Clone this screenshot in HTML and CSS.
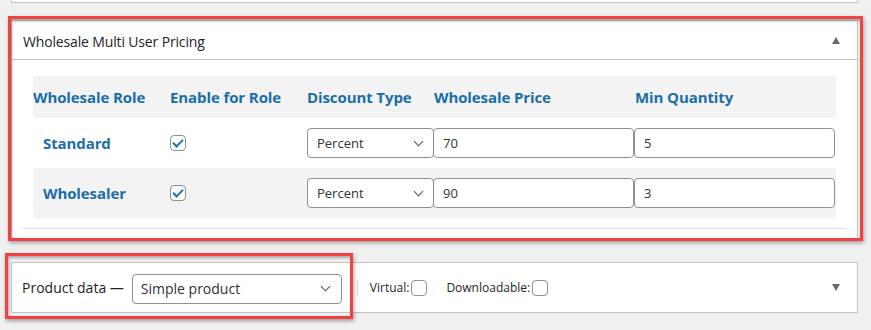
FILE: index.html
```html
<html>
	<head>
		<link rel="stylesheet" href="styles.css">
	</head>
<body>

	<div class="prev-box"></div>

	<div class="postbox" id="multi-user-pricing">
		<div class="postbox-header">
			<h2 class="hndle">Wholesale Multi User Pricing</h2>
			<span class="toggle-arrow up"></span>
		</div>
		<div class="inside">
			<table class="pricing">
				<thead>
					<tr>
						<th class="col-role">Wholesale Role</th>
						<th class="col-enable">Enable for Role</th>
						<th class="col-type">Discount Type</th>
						<th class="col-price">Wholesale Price</th>
						<th class="col-qty">Min Quantity</th>
					</tr>
				</thead>
				<tbody>
					<tr>
						<td class="role-name">Standard</td>
						<td><span class="checkbox checked"></span></td>
						<td><div class="select">Percent</div></td>
						<td><div class="text-input">70</div></td>
						<td><div class="text-input">5</div></td>
					</tr>
					<tr class="alt">
						<td class="role-name">Wholesaler</td>
						<td><span class="checkbox checked"></span></td>
						<td><div class="select">Percent</div></td>
						<td><div class="text-input">90</div></td>
						<td><div class="text-input">3</div></td>
					</tr>
				</tbody>
			</table>
			<div class="separator"></div>
		</div>
	</div>

	<div class="postbox" id="product-data">
		<div class="product-header">
			<span class="product-label">Product data —</span>
			<div class="select product-type">Simple product</div>
			<span class="divider"></span>
			<label class="option">Virtual:<span class="checkbox"></span></label>
			<label class="option">Downloadable:<span class="checkbox"></span></label>
			<span class="toggle-arrow down"></span>
		</div>
	</div>

	<!-- annotation outlines drawn over the screenshot -->
	<div class="mark mark-pricing"></div>
	<div class="mark mark-product"></div>

</body>
</html>
```

FILE: styles.css
```css
	body {
		margin: 0;
		background: #f0f0f1;
		font-family: "Open Sans", "Noto Sans", sans-serif;
		color: #1d2327;
		position: relative;
		width: 871px;
		height: 330px;
		overflow: hidden;
	}

	.prev-box {
		margin: 0 13px 0 11px;
		height: 2px;
		background: #fff;
		border: 1px solid #c3c4c7;
		border-top: none;
	}

	.postbox {
		margin: 0 13px 0 11px;
		background: #fff;
		border: 1px solid #c3c4c7;
	}
	#multi-user-pricing {
		margin-top: 17px;
	}
	#product-data {
		margin-top: 23px;
	}

	.postbox-header {
		display: flex;
		align-items: center;
		height: 38px;
		border-bottom: 1px solid #c3c4c7;
		padding: 0 11px;
	}
	.hndle {
		flex: 1;
		margin: 0;
		font-size: 14px;
		font-weight: normal;
		letter-spacing: -0.15px;
		padding-top: 3px;
	}

	.toggle-arrow {
		width: 0;
		height: 0;
		border-left: 4px solid transparent;
		border-right: 4px solid transparent;
		margin-right: 6px;
	}
	.toggle-arrow.up {
		border-bottom: 7px solid #646970;
	}
	.toggle-arrow.down {
		border-top: 7px solid #646970;
		margin-left: auto;
	}

	.inside {
		padding: 16px 11px 9px;
	}

	.pricing {
		border-collapse: collapse;
		margin: 0 10px;
		width: 803px;
		table-layout: fixed;
	}
	.pricing th {
		text-align: left;
		padding: 0;
		height: 42px;
		font-size: 15px;
		font-weight: bold;
		color: #1a6ea8;
		background: #f3f3f3;
		letter-spacing: -0.1px;
		white-space: nowrap;
	}
	.pricing td {
		padding: 0;
		height: 50px;
	}
	.pricing tr.alt td {
		background: #f3f3f3;
	}
	.col-role, .col-enable {width: 137px}
	.col-type {width: 127px}
	.col-price, .col-qty {width: 201px}

	.role-name {
		font-size: 15px;
		font-weight: bold;
		color: #1a6ea8;
		padding-left: 10px !important;
		letter-spacing: -0.1px;
	}

	.checkbox {
		display: inline-block;
		width: 14px;
		height: 14px;
		border: 1px solid #8c8f94;
		border-radius: 4px;
		background: #fff;
		vertical-align: middle;
		position: relative;
	}
	.checkbox.checked::after {
		content: "";
		position: absolute;
		left: 4px;
		top: 1px;
		width: 4px;
		height: 8px;
		border: solid #2271b1;
		border-width: 0 2px 2px 0;
		transform: rotate(45deg);
	}

	.select, .text-input {
		box-sizing: border-box;
		height: 30px;
		border: 1px solid #8c8f94;
		border-radius: 4px;
		background: #fff;
		font-size: 13px;
		color: #2c3338;
		display: flex;
		align-items: center;
		padding: 0 9px;
	}
	.select {
		position: relative;
		width: 127px;
		padding-right: 24px;
	}
	.select::after {
		content: "";
		position: absolute;
		right: 11px;
		top: 9px;
		width: 6px;
		height: 6px;
		border: solid #50575e;
		border-width: 0 1.5px 1.5px 0;
		transform: rotate(45deg);
	}
	.text-input {
		width: 201px;
		margin-left: -1px;
	}

	.separator {
		border-top: 1px solid #dcdcde;
		margin-top: 10px;
	}

	.product-header {
		display: flex;
		align-items: center;
		height: 49px;
		padding: 0 11px 0 10px;
	}
	.product-label {
		font-size: 14px;
		margin-right: 8px;
	}
	.product-type {
		width: 210px;
		font-size: 14px;
		margin-top: 2px;
		padding-left: 8px;
	}
	.product-type::after {
		top: 8px;
		right: 12px;
	}
	.divider {
		width: 1px;
		height: 16px;
		background: #dcdcde;
		margin: 0 12px 0 15px;
	}
	.option {
		display: flex;
		align-items: center;
		font-size: 12px;
		margin-right: 19px;
	}
	.option .checkbox {
		margin-left: 2px;
	}

	.mark {
		position: absolute;
		border: 3px solid #f24141;
		box-shadow: 1px 2px 4px rgba(0, 0, 0, 0.35), inset 1px 2px 3px rgba(0, 0, 0, 0.3);
		pointer-events: none;
	}
	.mark-pricing {
		left: 8px;
		top: 16px;
		width: 849px;
		height: 219px;
	}
	.mark-product {
		left: 5px;
		top: 253px;
		width: 342px;
		height: 60px;
	}
```
